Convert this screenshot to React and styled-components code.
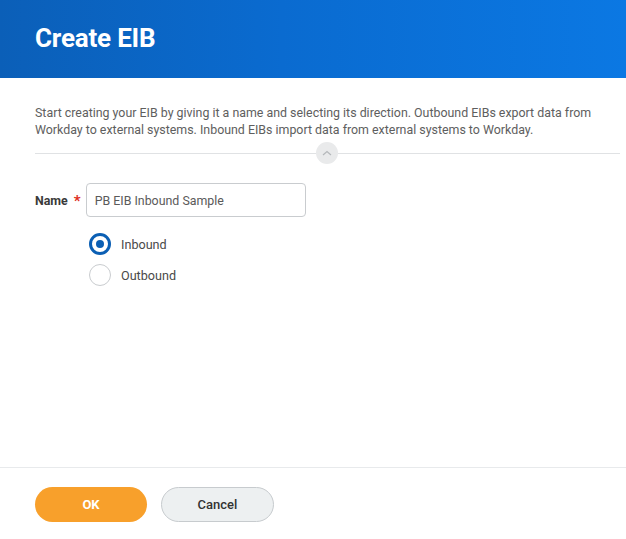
import React from "react";
import styled, { createGlobalStyle } from "styled-components";

const Global = createGlobalStyle`
  html, body { margin: 0; padding: 0; background: #fff; }
  body { font-family: Roboto, "Liberation Sans", Arial, sans-serif; }
  * { box-sizing: border-box; }
`;

const Page = styled.div`
  width: 626px;
  height: 539px;
  display: flex;
  flex-direction: column;
  background: #fff;
  overflow: hidden;
`;

const Header = styled.div`
  height: 78px;
  flex-shrink: 0;
  background: linear-gradient(90deg, #0b5fb8 0%, #0a6bd0 45%, #0b78e3 100%);
  display: flex;
  align-items: center;
  padding: 0 0 3px 35px;
`;

const Title = styled.h1`
  margin: 0;
  color: #fff;
  font-size: 26px;
  font-weight: 700;
  letter-spacing: -0.2px;
`;

const Body = styled.div`
  flex: 1;
  padding: 26px 6px 0 35px;
`;

const Intro = styled.p`
  margin: 0;
  font-size: 12.4px;
  line-height: 17px;
  color: #5e5e5e;
  padding-right: 20px;
`;

const Divider = styled.div`
  position: relative;
  margin-top: 15px;
  height: 1px;
  background: #e0e2e4;
`;

const Toggle = styled.div`
  position: absolute;
  left: 281px;
  top: -11px;
  width: 22px;
  height: 22px;
  border-radius: 50%;
  background: #e9eaeb;
  display: flex;
  align-items: center;
  justify-content: center;
`;

const Field = styled.div`
  display: flex;
  align-items: center;
  margin-top: 29px;
`;

const Label = styled.label`
  font-size: 12.4px;
  font-weight: 700;
  color: #3a3a3a;
`;

const Required = styled.span`
  color: #de2e21;
  font-size: 15px;
  font-weight: 700;
  margin: 0 5px 0 6px;
  line-height: 1;
  position: relative;
  top: 1px;
`;

const Input = styled.div`
  width: 220px;
  height: 34px;
  border: 1px solid #c9cccf;
  border-radius: 4px;
  display: flex;
  align-items: center;
  padding-left: 8px;
  font-size: 12.4px;
  color: #5a5a5a;
`;

const Radios = styled.div`
  display: flex;
  flex-direction: column;
  gap: 9px;
  margin: 16px 0 0 54px;
`;

const RadioRow = styled.div`
  display: flex;
  align-items: center;
  gap: 10px;
  font-size: 12.6px;
  color: #494949;
`;

const Dot = styled.span`
  width: 22px;
  height: 22px;
  border-radius: 50%;
  flex-shrink: 0;
  border: ${(p) => (p.checked ? "3px solid #0b5fb4" : "1px solid #c9cccf")};
  display: flex;
  align-items: center;
  justify-content: center;
  &::after {
    content: "";
    width: 8px;
    height: 8px;
    border-radius: 50%;
    background: #0b5fb4;
    display: ${(p) => (p.checked ? "block" : "none")};
  }
`;

const Footer = styled.div`
  flex-shrink: 0;
  height: 72px;
  border-top: 1px solid #e8eaec;
  display: flex;
  align-items: flex-start;
  gap: 14px;
  padding: 19px 0 0 35px;
`;

const Button = styled.button`
  width: ${(p) => (p.primary ? "112px" : "113px")};
  height: 35px;
  border-radius: 18px;
  font-family: inherit;
  font-size: 13px;
  cursor: pointer;
  border: ${(p) => (p.primary ? "none" : "1px solid #c7cbce")};
  background: ${(p) => (p.primary ? "#f8a02b" : "#edf0f1")};
  color: ${(p) => (p.primary ? "#fff" : "#333")};
  font-weight: ${(p) => (p.primary ? 700 : 500)};
`;

export default function App() {
  return (
    <Page>
      <Global />
      <Header>
        <Title>Create EIB</Title>
      </Header>
      <Body>
        <Intro>
          Start creating your EIB by giving it a name and selecting its direction. Outbound EIBs export data from
          Workday to external systems. Inbound EIBs import data from external systems to Workday.
        </Intro>
        <Divider>
          <Toggle>
            <svg width="10" height="6" viewBox="0 0 10 6">
              <path d="M1 5 L5 1.5 L9 5" fill="none" stroke="#b5b8bb" strokeWidth="1.2" />
            </svg>
          </Toggle>
        </Divider>
        <Field>
          <Label>Name</Label>
          <Required>*</Required>
          <Input>PB EIB Inbound Sample</Input>
        </Field>
        <Radios>
          <RadioRow>
            <Dot checked />
            Inbound
          </RadioRow>
          <RadioRow>
            <Dot />
            Outbound
          </RadioRow>
        </Radios>
      </Body>
      <Footer>
        <Button primary>OK</Button>
        <Button>Cancel</Button>
      </Footer>
    </Page>
  );
}
